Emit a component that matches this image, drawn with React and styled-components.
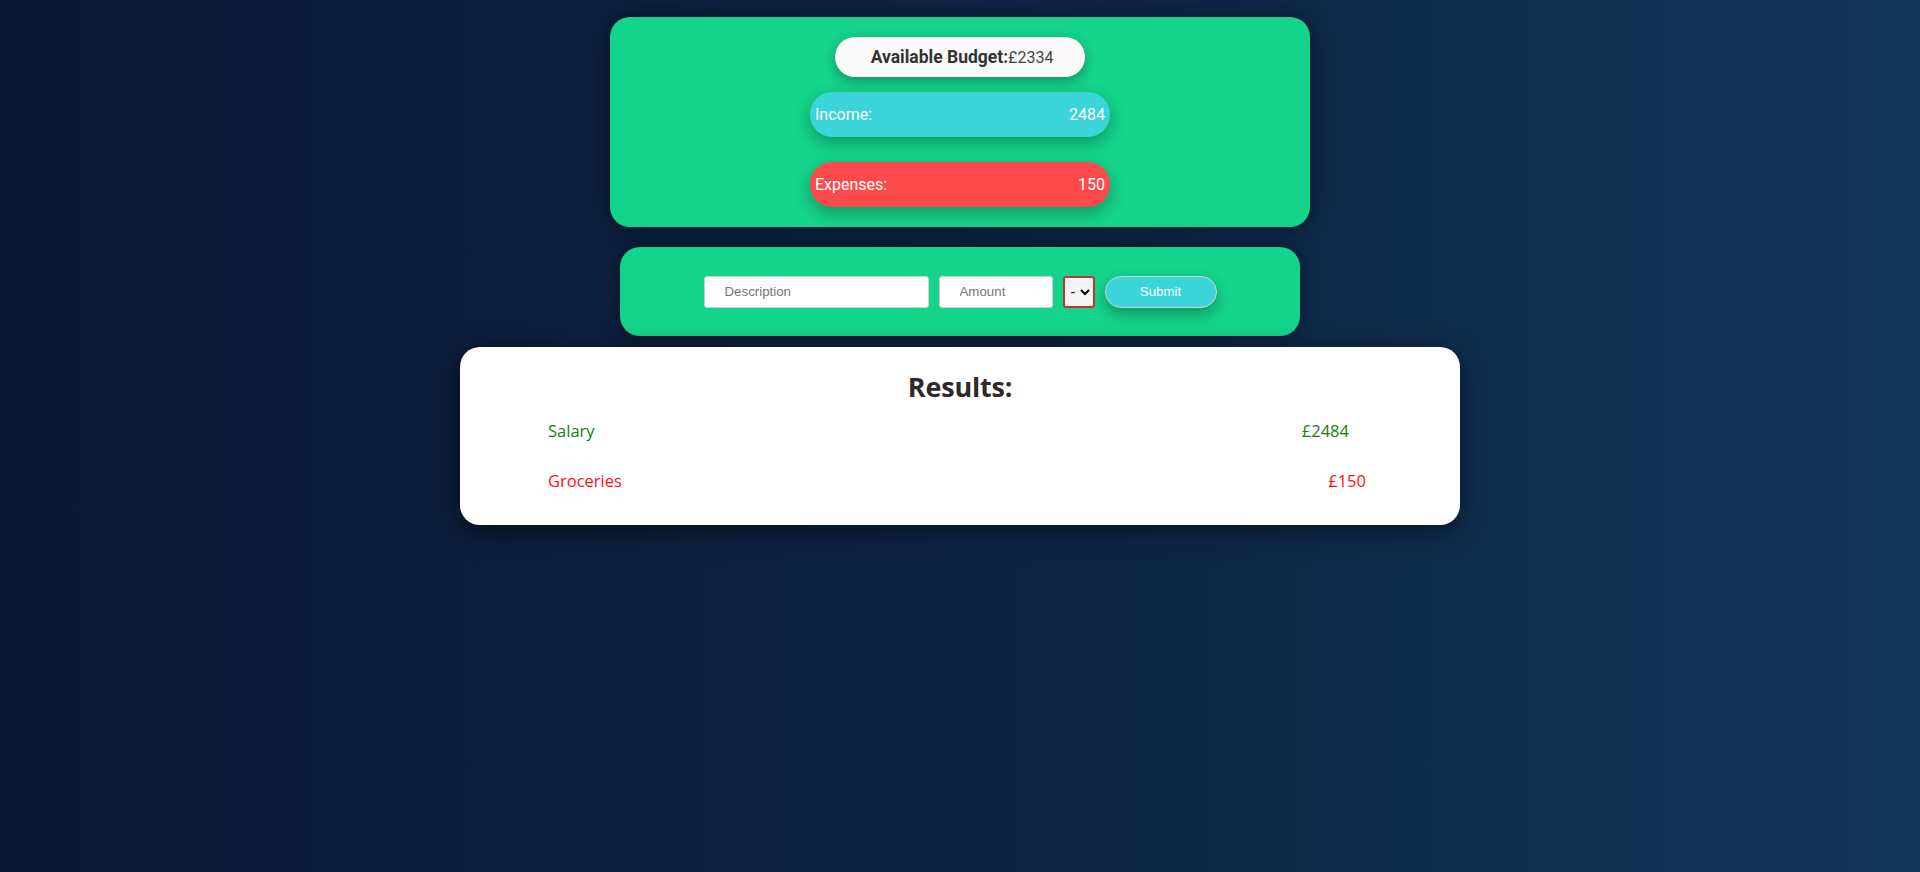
import React from 'react';
import styled, { createGlobalStyle } from 'styled-components';

const GlobalStyle = createGlobalStyle`
  html, body {
    margin: 0;
    padding: 0;
    min-height: 100%;
  }
  body {
    min-height: 872px;
    background: linear-gradient(to right, #0a1833 0%, #0e2645 60%, #12365b 100%);
    font-family: Roboto, "Liberation Sans", sans-serif;
  }
`;

const Page = styled.main`
  display: flex;
  flex-direction: column;
  align-items: center;
  padding-top: 17px;
`;

const BudgetCard = styled.section`
  box-sizing: border-box;
  width: 700px;
  height: 210px;
  padding-top: 20px;
  background-color: #14d38b;
  border-radius: 20px;
  box-shadow: 0 0 22px rgba(0, 0, 0, 0.45);
  display: flex;
  flex-direction: column;
  align-items: center;
`;

const BudgetPill = styled.div`
  box-sizing: border-box;
  width: 250px;
  height: 40px;
  border-radius: 20px;
  background-color: #fafafa;
  box-shadow: 0 4px 12px rgba(0, 0, 0, 0.3);
  display: flex;
  align-items: center;
  justify-content: center;
  padding-left: 4px;
  font-family: Roboto, sans-serif;
  color: #333;
`;

const BudgetLabel = styled.span`
  font-size: 17.5px;
  font-weight: 700;
`;

const BudgetValue = styled.span`
  font-size: 16px;
  color: #444;
`;

const TotalBar = styled.div`
  box-sizing: border-box;
  width: 300px;
  height: 45px;
  margin-top: ${(p) => p.$gap}px;
  padding: 0 5px;
  border-radius: 22px;
  background-color: ${(p) => p.$color};
  box-shadow: 0 6px 16px rgba(0, 0, 0, 0.28);
  display: flex;
  align-items: center;
  justify-content: space-between;
  color: #fff;
  font-family: Roboto, sans-serif;
  font-size: 16px;
`;

const FormCard = styled.form`
  box-sizing: border-box;
  width: 680px;
  height: 89px;
  margin-top: 20px;
  background-color: #14d38b;
  border-radius: 20px;
  box-shadow: 0 0 18px rgba(0, 0, 0, 0.4);
  display: flex;
  align-items: center;
  justify-content: center;
  gap: 10px;
`;

const TextInput = styled.input`
  box-sizing: border-box;
  width: ${(p) => p.$width}px;
  height: 32px;
  padding: 0 0 0 20px;
  border: 1px solid #d0d0d0;
  border-radius: 3px;
  background: #fff;
  font-family: "Liberation Sans", Arial, sans-serif;
  font-size: 13.3px;
  color: #333;
  outline: none;

  &::placeholder {
    color: #757575;
  }
`;

const TypeSelect = styled.select`
  box-sizing: border-box;
  width: 32px;
  height: 32px;
  border: 2px solid #c8302f;
  border-radius: 3px;
  background: #f4f4f4;
  font-family: "Liberation Sans", Arial, sans-serif;
  font-size: 14px;
  padding: 0 0 0 2px;
`;

const SubmitButton = styled.button`
  box-sizing: border-box;
  width: 112px;
  height: 32px;
  border: 1px solid #c9d6d6;
  border-radius: 16px;
  background-color: #3ad4d9;
  color: #fff;
  font-family: "Liberation Sans", Arial, sans-serif;
  font-size: 13.3px;
  box-shadow: 0 6px 14px rgba(0, 0, 0, 0.3);
  cursor: pointer;
`;

const ResultsCard = styled.section`
  box-sizing: border-box;
  width: 1000px;
  height: 178px;
  margin-top: 11px;
  padding-top: 22px;
  background-color: #fff;
  border-radius: 20px;
  box-shadow: 0 6px 26px rgba(0, 0, 0, 0.5);
  font-family: "Open Sans", "Noto Sans", sans-serif;
`;

const ResultsTitle = styled.h2`
  margin: 0;
  text-align: center;
  font-size: 27px;
  font-weight: 700;
  line-height: 36px;
  color: #2e2a2b;
  letter-spacing: -0.2px;
`;

const ResultList = styled.ul`
  list-style: none;
  margin: 0;
  padding: 0 94px 0 88px;
`;

const ResultRow = styled.li`
  display: flex;
  justify-content: space-between;
  align-items: center;
  height: 50px;
  font-size: 16.5px;
  color: ${(p) => (p.$kind === 'income' ? '#148014' : '#ff1010')};
`;

const Amount = styled.span`
  margin-right: ${(p) => p.$offset}px;
`;

const entries = [
  { id: 1, name: 'Salary', amount: 2484, kind: 'income' },
  { id: 2, name: 'Groceries', amount: 150, kind: 'expense' },
];

export default function App() {
  const income = entries.filter((e) => e.kind === 'income').reduce((s, e) => s + e.amount, 0);
  const expenses = entries.filter((e) => e.kind === 'expense').reduce((s, e) => s + e.amount, 0);

  return (
    <>
      <GlobalStyle />
      <Page>
        <BudgetCard>
          <BudgetPill>
            <BudgetLabel>Available Budget:</BudgetLabel>
            <BudgetValue>£{income - expenses}</BudgetValue>
          </BudgetPill>
          <TotalBar $color="#3ad4d9" $gap={15}>
            <span>Income:</span>
            <span>{income}</span>
          </TotalBar>
          <TotalBar $color="#fd4a4c" $gap={25}>
            <span>Expenses:</span>
            <span>{expenses}</span>
          </TotalBar>
        </BudgetCard>

        <FormCard onSubmit={(e) => e.preventDefault()}>
          <TextInput $width={225} placeholder="Description" />
          <TextInput $width={114} placeholder="Amount" />
          <TypeSelect defaultValue="-">
            <option value="-">-</option>
            <option value="+">+</option>
          </TypeSelect>
          <SubmitButton type="submit">Submit</SubmitButton>
        </FormCard>

        <ResultsCard>
          <ResultsTitle>Results:</ResultsTitle>
          <ResultList>
            {entries.map((e) => (
              <ResultRow key={e.id} $kind={e.kind}>
                <span>{e.name}</span>
                <Amount $offset={e.kind === 'income' ? 17 : 0}>£{e.amount}</Amount>
              </ResultRow>
            ))}
          </ResultList>
        </ResultsCard>
      </Page>
    </>
  );
}
